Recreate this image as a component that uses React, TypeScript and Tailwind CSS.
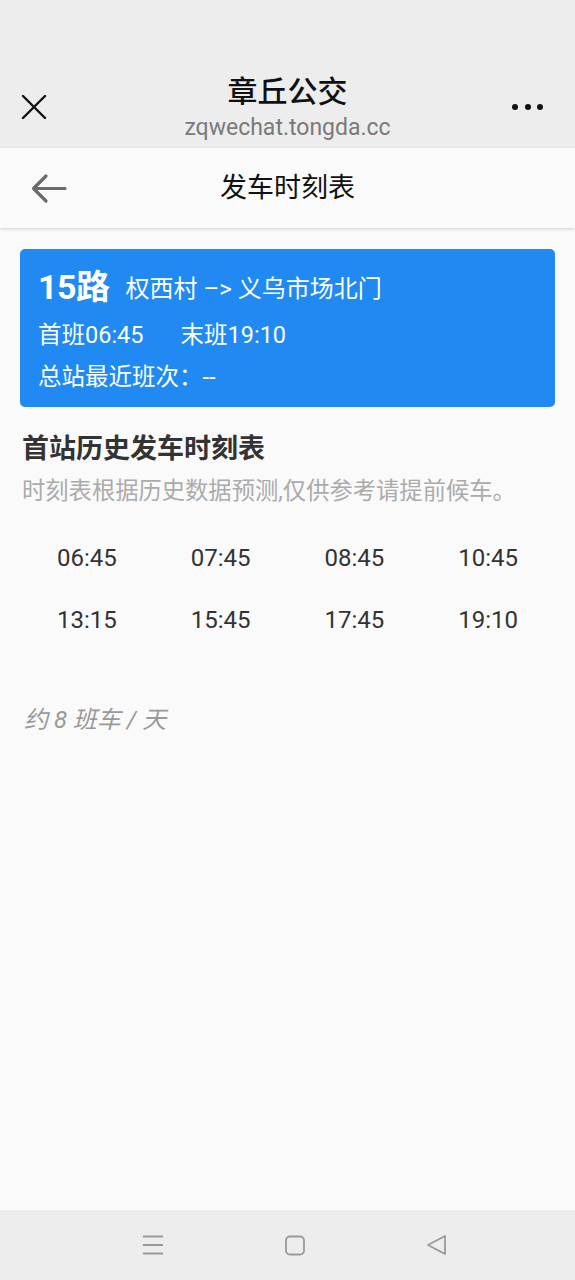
import React from "react";

const font = { fontFamily: "Roboto, 'Noto Sans CJK SC', sans-serif" };

const times = ["06:45", "07:45", "08:45", "10:45", "13:15", "15:45", "17:45", "19:10"];

export default function App() {
  return (
    <div
      className="flex min-h-[1280px] w-[575px] flex-col bg-[#fafafa]"
      style={font}
    >
      {/* WeChat top bar */}
      <div className="relative flex h-[148px] flex-col items-center bg-[#ededed]">
        <div className="mt-[72px] text-[30px] leading-[40px] font-medium text-[#111]">章丘公交</div>
        <div className="mt-[2px] text-[23px] leading-[28px] text-[#7a7a7a]">zqwechat.tongda.cc</div>
        <svg
          className="absolute left-[21px] top-[95px]"
          width="26"
          height="24"
          viewBox="0 0 26 24"
        >
          <path d="M2 1 L24 23 M24 1 L2 23" stroke="#111" strokeWidth="2.4" strokeLinecap="round" />
        </svg>
        <div className="absolute left-[512px] top-[104px] flex gap-[6.5px]">
          <span className="h-[6px] w-[6px] rounded-full bg-[#111]" />
          <span className="h-[6px] w-[6px] rounded-full bg-[#111]" />
          <span className="h-[6px] w-[6px] rounded-full bg-[#111]" />
        </div>
      </div>

      {/* Page header */}
      <div className="relative z-10 flex h-[80px] items-center justify-center bg-[#fafafa] shadow-[0_1px_3px_rgba(0,0,0,0.18)]">
        <svg
          className="absolute left-[31px] top-[25px]"
          width="36"
          height="31"
          viewBox="0 0 36 31"
        >
          <path
            d="M34 15.5 H3 M15 3 L2.5 15.5 L15 28"
            stroke="#6a6a6a"
            strokeWidth="3.2"
            strokeLinecap="round"
            strokeLinejoin="round"
            fill="none"
          />
        </svg>
        <div className="text-[27px] leading-[40px] text-[#111]">发车时刻表</div>
      </div>

      {/* Content */}
      <div className="flex flex-1 flex-col px-[20px]">
        <div className="mt-[21px] rounded-[5px] bg-[#208af2] px-[18px] pt-[16px] pb-[9px] text-white">
          <div className="flex h-[44px] items-center">
            <span className="text-[34px] font-bold leading-[44px] tracking-[-0.5px]">15路</span>
            <span className="ml-[16px] mt-[4px] text-[24px] leading-[44px]">权西村 –&gt; 义乌市场北门</span>
          </div>
          <div className="mt-[5px] flex text-[23.5px] leading-[42px]">
            <span>首班06:45</span>
            <span className="ml-[37px]">末班19:10</span>
          </div>
          <div className="text-[23.5px] leading-[42px]">总站最近班次：--</div>
        </div>

        <div className="ml-[2px] mt-[22px] text-[27px] font-bold leading-[40px] text-[#333]">首站历史发车时刻表</div>
        <div className="ml-[2px] mt-[2px] text-[23.3px] leading-[40px] text-[#ababab]">
          时刻表根据历史数据预测,仅供参考请提前候车。
        </div>

        <div className="mt-[16px] grid grid-cols-4">
          {times.map((t) => (
            <div key={t} className="text-center text-[24px] leading-[62px] text-[#333]">
              {t}
            </div>
          ))}
        </div>

        <div className="ml-[4px] mt-[49px] text-[24px] italic leading-[40px] text-[#999]">约 8 班车 / 天</div>
      </div>

      {/* Android nav bar */}
      <div className="flex h-[70px] items-center bg-[#ededed] pl-[142px]">
        <div className="flex w-[305px] items-center justify-between">
          <svg width="22" height="20" viewBox="0 0 22 20">
            <path d="M1 1.5 H21 M1 10 H21 M1 18.5 H21" stroke="#999" strokeWidth="1.8" />
          </svg>
          <svg width="20" height="21" viewBox="0 0 20 21">
            <rect x="1" y="1.5" width="18" height="18" rx="4" stroke="#999" strokeWidth="1.8" fill="none" />
          </svg>
          <svg width="21" height="22" viewBox="0 0 21 22">
            <path d="M19 2 L2 11 L19 20 Z" stroke="#999" strokeWidth="1.8" strokeLinejoin="round" fill="none" />
          </svg>
        </div>
      </div>
    </div>
  );
}
